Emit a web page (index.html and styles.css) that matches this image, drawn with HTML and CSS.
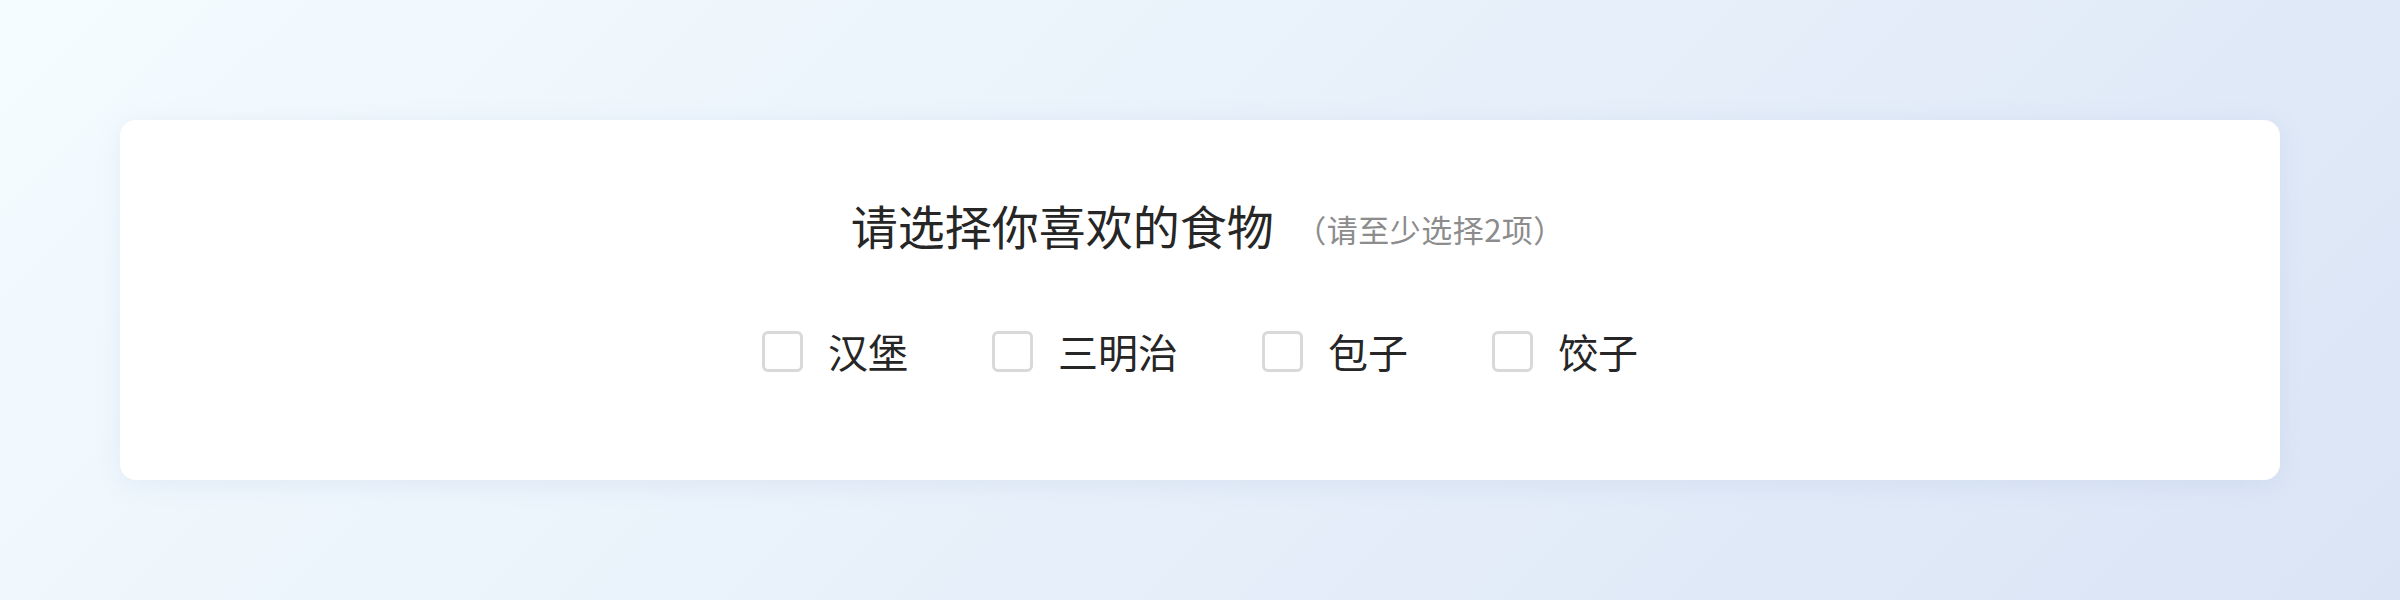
FILE: index.html
```html
<!DOCTYPE html>
<html lang="zh-CN">
<head>
<meta charset="utf-8">
<title>食物选择</title>
<link rel="stylesheet" href="styles.css">
</head>
<body>
  <main class="page">
    <section class="card">
      <header class="question">
        <h1 class="question-title">请选择你喜欢的食物</h1>
        <span class="question-hint">（请至少选择2项）</span>
      </header>
      <div class="options">
        <label class="option"><span class="checkbox"></span><span class="option-text">汉堡</span></label>
        <label class="option"><span class="checkbox"></span><span class="option-text">三明治</span></label>
        <label class="option"><span class="checkbox"></span><span class="option-text">包子</span></label>
        <label class="option"><span class="checkbox"></span><span class="option-text">饺子</span></label>
      </div>
    </section>
  </main>
</body>
</html>
```
FILE: styles.css
```css
html, body {
  margin: 0;
  padding: 0;
}

body {
  font-family: "Noto Sans CJK SC", "Noto Sans", sans-serif;
  color: #262626;
}

.page {
  box-sizing: border-box;
  width: 2400px;
  height: 600px;
  padding: 120px;
  background: linear-gradient(135deg, #f5fcff 0%, #dae4f5 100%);
}

.card {
  box-sizing: border-box;
  height: 360px;
  padding-top: 73px;
  background: #ffffff;
  border-radius: 16px;
  box-shadow: 0 4px 24px rgba(120, 150, 200, 0.12);
  display: flex;
  flex-direction: column;
  align-items: center;
}

.question {
  display: flex;
  align-items: center;
  height: 64px;
}

.question-title {
  margin: 0;
  font-size: 47px;
  line-height: 64px;
  font-weight: 400;
  color: #262626;
}

/* half-width brackets keep the hint snug */
.question-hint {
  margin-left: 37px;
  padding-top: 6px;
  font-size: 31px;
  letter-spacing: 0.5px;
  color: #8c8c8c;
  font-feature-settings: "halt";
}

.options {
  display: flex;
  align-items: center;
  gap: 84px;
  margin-top: 74px;
}

.option {
  display: flex;
  align-items: center;
  cursor: pointer;
}

.checkbox {
  box-sizing: border-box;
  width: 41px;
  height: 41px;
  border: 3px solid #d9d9d9;
  border-radius: 6px;
  background: #ffffff;
  margin-right: 25px;
}

.option-text {
  font-size: 40px;
  line-height: 41px;
  color: #262626;
}
```
